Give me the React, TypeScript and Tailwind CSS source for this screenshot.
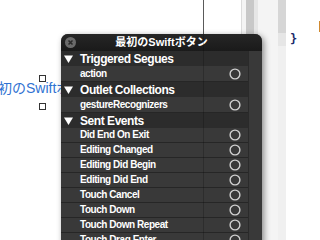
import React from "react";

const sans = { fontFamily: '"Liberation Sans", "Noto Sans CJK JP", sans-serif' };

type Row = { kind: "header" | "item"; label: string };

const rows: Row[] = [
  { kind: "header", label: "Triggered Segues" },
  { kind: "item", label: "action" },
  { kind: "header", label: "Outlet Collections" },
  { kind: "item", label: "gestureRecognizers" },
  { kind: "header", label: "Sent Events" },
  { kind: "item", label: "Did End On Exit" },
  { kind: "item", label: "Editing Changed" },
  { kind: "item", label: "Editing Did Begin" },
  { kind: "item", label: "Editing Did End" },
  { kind: "item", label: "Touch Cancel" },
  { kind: "item", label: "Touch Down" },
  { kind: "item", label: "Touch Down Repeat" },
  { kind: "item", label: "Touch Drag Enter" },
];

function Handle({ className }: { className: string }) {
  return <div className={`absolute w-[7px] h-[7px] bg-white border border-[#333] ${className}`} />;
}

function OutletCircle() {
  return (
    <svg width="12" height="12" viewBox="0 0 12 12" className="shrink-0">
      <circle cx="6" cy="6" r="4.9" fill="none" stroke="#d0d0d0" strokeWidth="1.4" />
    </svg>
  );
}

function ConnectionsPanel() {
  return (
    <div className="absolute left-[61px] top-[34px] w-[201px] h-[230px] rounded-t-[7px] overflow-hidden bg-[#393939] shadow-[2px_2px_6px_rgba(0,0,0,0.45)]">
      {/* title bar */}
      <div className="relative h-[17px] flex items-center justify-center bg-gradient-to-b from-[#262626] to-[#1a1a1a]">
        <div className="absolute left-[4px] top-[3px] w-[11px] h-[11px] rounded-full bg-[#6b6b6b] flex items-center justify-center">
          <svg width="7" height="7" viewBox="0 0 7 7">
            <path d="M1.5 1.5 L5.5 5.5 M5.5 1.5 L1.5 5.5" stroke="#2a2a2a" strokeWidth="1.5" />
          </svg>
        </div>
        <span className="text-white text-[11px] font-bold leading-none" style={sans}>
          最初のSwiftボタン
        </span>
      </div>

      {rows.map((r, i) =>
        r.kind === "header" ? (
          <div key={i} className="flex h-[15px] bg-[#2c2c2c]">
            <div className="flex-1 flex items-center gap-[7px] pl-[3px]">
              <svg width="9" height="8" viewBox="0 0 9 8">
                <polygon points="0,0.5 9,0.5 4.5,8" fill="#ffffff" />
              </svg>
              <span className="text-white text-[12px] font-bold tracking-[-0.45px] leading-none" style={sans}>
                {r.label}
              </span>
            </div>
            <div className="w-[14px] bg-[#393939] border-l border-[#2a2a2a]" />
          </div>
        ) : (
          <div key={i} className={`flex ${i === 1 || i === 3 ? "h-[16px]" : "h-[15px]"}`}>
            <div className="flex-1 flex items-center border-b border-[#262626] pl-[19px] pr-[7px]">
              <span className="flex-1 text-white text-[10px] font-bold tracking-[-0.45px] leading-none" style={sans}>
                {r.label}
              </span>
              <OutletCircle />
            </div>
            <div className="w-[14px] bg-[#393939] border-l border-[#2a2a2a]" />
          </div>
        )
      )}

      {/* guide line showing through */}
      <div className="absolute left-[142px] top-0 w-px h-full bg-black/20" />
    </div>
  );
}

export default function App() {
  return (
    <div className="relative w-[320px] h-[240px] overflow-hidden bg-white">
      {/* editor background columns */}
      <div className="absolute inset-0 flex">
        <div className="w-[241px] bg-white" />
        <div className="w-px bg-[#dcdcdc]" />
        <div className="w-[4px] bg-[#f4f4f4]" />
        <div className="w-[8px] bg-[#c8c8c8]" />
        <div className="w-[4px] bg-[#e6e6e6]" />
        <div className="w-[20px] bg-[#f4f4f4]" />
        <div className="w-[8px] flex flex-col">
          <div className="h-[33px] bg-[#d6d6d6]" />
          <div className="h-[13px] bg-[#e6e6e6]" />
          <div className="flex-1 bg-[#f0f0f0]" />
        </div>
        <div className="flex-1 bg-white relative">
          <span className="absolute left-[4px] top-[30px] text-[12px] font-bold text-[#1a2a6a]" style={{ fontFamily: '"DejaVu Sans Mono", monospace' }}>
            {"}"}
          </span>
          <div className="absolute right-0 top-[21px] w-px h-[11px] bg-[#d08a30]" />
        </div>
      </div>

      {/* vertical guide line */}
      <div className="absolute left-[203px] top-0 w-px h-[34px] bg-[#5a5a5a]" />

      {/* selected button in canvas */}
      <div className="absolute left-[-16px] top-[81px] text-[14px] leading-none text-[#2f72d2] whitespace-nowrap" style={sans}>
        最初のSwiftボタン
      </div>
      <Handle className="left-[39px] top-[75px]" />
      <Handle className="left-[39px] top-[103px]" />

      <ConnectionsPanel />
    </div>
  );
}
